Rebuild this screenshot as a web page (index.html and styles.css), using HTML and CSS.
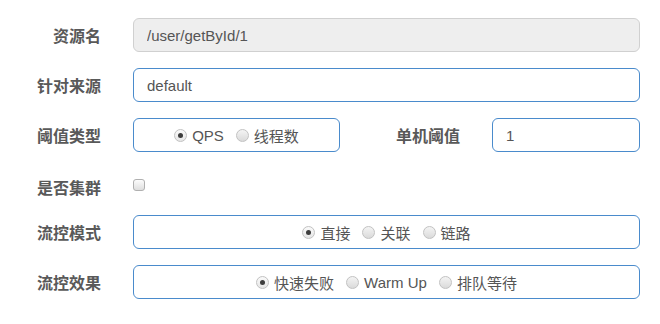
FILE: index.html
```
<!DOCTYPE html>
<html lang="zh-CN">
<head>
    <meta charset="UTF-8">
    <title>新增流控规则</title>
    <link rel="stylesheet" href="styles.css">
</head>
<body>
    <form class="rule-form">
        <div class="row">
            <label class="label">资源名</label>
            <input class="field" type="text" value="/user/getById/1" disabled>
        </div>

        <div class="row">
            <label class="label">针对来源</label>
            <input class="field" type="text" value="default">
        </div>

        <div class="row">
            <label class="label">阈值类型</label>
            <div class="radio-box grade-box">
                <span class="option"><span class="radio checked"></span>QPS</span>
                <span class="option"><span class="radio"></span>线程数</span>
            </div>
            <label class="label label-inline">单机阈值</label>
            <input class="field count-field" type="text" value="1">
        </div>

        <div class="row check-row">
            <label class="label">是否集群</label>
            <span class="checkbox"></span>
        </div>

        <div class="row">
            <label class="label">流控模式</label>
            <div class="radio-box">
                <span class="option"><span class="radio checked"></span>直接</span>
                <span class="option"><span class="radio"></span>关联</span>
                <span class="option"><span class="radio"></span>链路</span>
            </div>
        </div>

        <div class="row">
            <label class="label">流控效果</label>
            <div class="radio-box">
                <span class="option"><span class="radio checked"></span>快速失败</span>
                <span class="option"><span class="radio"></span>Warm Up</span>
                <span class="option"><span class="radio"></span>排队等待</span>
            </div>
        </div>
    </form>
</body>
</html>
```

FILE: styles.css
```
body {
    margin: 0;
    background-color: #fff;
    font-family: "Liberation Sans", "Noto Sans CJK SC", sans-serif;
    color: #555;
}

.rule-form {
    display: flex;
    flex-direction: column;
    gap: 16px;
    padding-top: 18px;
    width: 640px;
}

.row {
    display: flex;
    align-items: center;
    height: 34px;
}

.label {
    width: 101px;
    margin-right: 32px;
    text-align: right;
    font-family: "Noto Sans CJK SC", sans-serif;
    font-size: 16px;
    font-weight: bold;
    color: #595959;
    flex-shrink: 0;
}

.label-inline {
    width: 120px;
}

.field {
    flex: 1;
    height: 34px;
    box-sizing: border-box;
    padding: 0 13px;
    border: 1px solid #4a8bcc;
    border-radius: 6px;
    background-color: #fff;
    font-family: "Liberation Sans", "Noto Sans CJK SC", sans-serif;
    font-size: 15px;
    color: #555;
    outline: none;
}

.field:disabled {
    background-color: #eee;
    border-color: #d0d0d0;
    color: #555;
}

.count-field {
    flex: none;
    width: 148px;
}

.radio-box {
    flex: 1;
    height: 34px;
    box-sizing: border-box;
    display: flex;
    align-items: center;
    justify-content: center;
    gap: 12px;
    border: 1px solid #4a8bcc;
    border-radius: 6px;
    font-size: 15px;
    color: #555;
}

.grade-box {
    flex: none;
    width: 207px;
    padding-top: 1px;
}

.option {
    display: flex;
    align-items: center;
    gap: 5px;
}

.radio {
    width: 11px;
    height: 11px;
    border: 1px solid #c2c2c2;
    border-radius: 50%;
    background: linear-gradient(#f4f4f4, #dadada);
    position: relative;
}

.radio.checked {
    background: linear-gradient(#fafafa, #e6e6e6);
}

.radio.checked::after {
    content: '';
    position: absolute;
    width: 5px;
    height: 5px;
    border-radius: 50%;
    background-color: #3d3d3d;
    left: 3px;
    top: 3px;
}

.check-row {
    height: 31px;
    padding-top: 6px;
    box-sizing: border-box;
}

.checkbox {
    width: 10px;
    height: 10px;
    border: 1px solid #b0b0b0;
    border-radius: 3px;
    background: linear-gradient(#fcfcfc, #dedede);
    margin-top: -3px;
}
```
